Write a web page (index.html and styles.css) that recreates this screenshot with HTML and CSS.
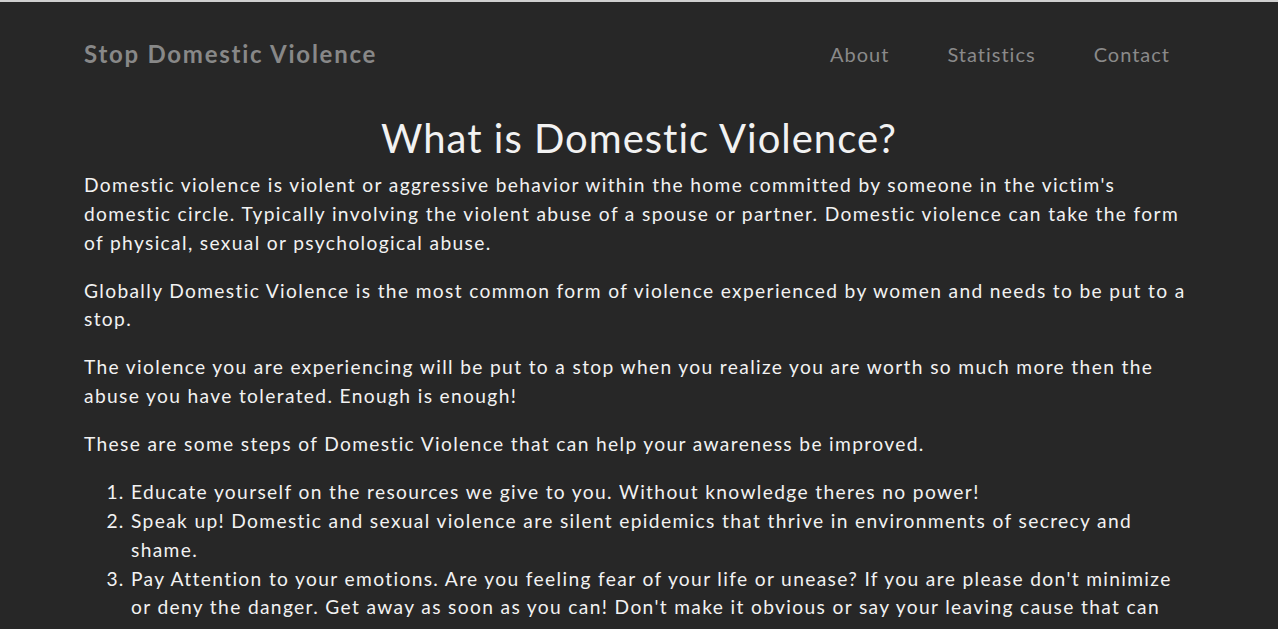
FILE: index.html
```html
<!DOCTYPE html>
<html lang="en">
<head>
<meta charset="utf-8">
<title>Stop Domestic Violence</title>
<link rel="stylesheet" href="styles.css">
</head>
<body>
<header class="navbar">
  <div class="container nav-inner">
    <a class="brand" href="#">Stop Domestic Violence</a>
    <nav class="nav-links">
      <a class="nav-link" href="#">About</a>
      <a class="nav-link" href="#">Statistics</a>
      <a class="nav-link" href="#">Contact</a>
    </nav>
  </div>
</header>
<main class="container content">
  <h1 class="title">What is Domestic Violence?</h1>
  <p>Domestic violence is violent or aggressive behavior within the home committed by someone in the victim's domestic circle. Typically involving the violent abuse of a spouse or partner. Domestic violence can take the form of physical, sexual or psychological abuse.</p>
  <p>Globally Domestic Violence is the most common form of violence experienced by women and needs to be put to a stop.</p>
  <p>The violence you are experiencing will be put to a stop when you realize you are worth so much more then the abuse you have tolerated. Enough is enough!</p>
  <p>These are some steps of Domestic Violence that can help your awareness be improved.</p>
  <ol class="steps">
    <li>Educate yourself on the resources we give to you. Without knowledge theres no power!</li>
    <li>Speak up! Domestic and sexual violence are silent epidemics that thrive in environments of secrecy and shame.</li>
    <li>Pay Attention to your emotions. Are you feeling fear of your life or unease? If you are please don't minimize or deny the danger. Get away as soon as you can! Don't make it obvious or say your leaving cause that can make things worse. Reach out for help.</li>
  </ol>
</main>
</body>
</html>
```
FILE: styles.css
```css
html, body {
  margin: 0;
  padding: 0;
}
body {
  background: #272727;
  border-top: 2px solid #cfcfcf;
  color: #f2f2f2;
  font-family: Lato, "Noto Sans", sans-serif;
  letter-spacing: 1.35px;
}
.container {
  max-width: 1110px;
  margin: 0 auto;
  padding: 0 15px;
}
.navbar {
  padding: 34px 0 26px;
}
.nav-inner {
  display: flex;
  align-items: center;
  justify-content: space-between;
}
.brand {
  color: #888888;
  font-weight: 700;
  font-size: 24px;
  line-height: 36px;
  letter-spacing: 1.75px;
  text-decoration: none;
}
.nav-links {
  display: flex;
  padding-right: 24px;
}
.nav-link {
  color: #8a8a8a;
  font-size: 20px;
  line-height: 36px;
  letter-spacing: 1px;
  text-decoration: none;
  margin-left: 58px;
}
.title {
  text-align: center;
  font-size: 40px;
  font-weight: 400;
  line-height: 48px;
  letter-spacing: 1px;
  margin: 16px 0 9px;
}
.content p,
.steps {
  font-size: 19.2px;
  line-height: 28.8px;
  margin: 0 0 19.2px;
}
.steps {
  padding-left: 47px;
}
```
